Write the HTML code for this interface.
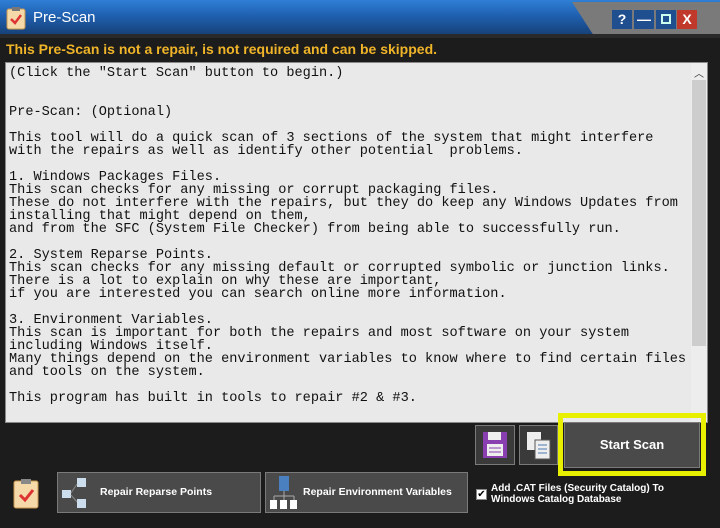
<!DOCTYPE html>
<html><head><meta charset="utf-8"><style>
*{margin:0;padding:0;box-sizing:border-box}
body{width:720px;height:528px;background:#1c1c1c;position:relative;overflow:hidden;font-family:"Liberation Sans",sans-serif}
.tb{position:absolute;left:0;top:0;width:720px;height:36px;background:linear-gradient(180deg,#2f7fd6 0%,#1f5fae 45%,#163f74 100%)}
.tb2{position:absolute;left:0;top:34px;width:720px;height:4px;background:#2a2a2a}
.tab{position:absolute;left:572px;top:2px;width:148px;height:32px;background:#7a7a7a;clip-path:polygon(0 0,100% 0,100% 100%,14% 100%)}
.title{position:absolute;left:33px;top:9px;color:#fff;font-size:15px}
.wb{position:absolute;top:10px;width:20px;height:19px;background:#1f4f8f;color:#fff;font-weight:bold;font-size:14px;text-align:center;line-height:19px}
.hdr{position:absolute;left:6px;top:41px;color:#f0b429;font-weight:bold;font-size:14px}
.ta{position:absolute;left:5px;top:62px;width:703px;height:361px;background:#e9e9e9;border:1px solid #888}
pre{position:absolute;left:3px;top:4px;font-family:"Liberation Mono","DejaVu Sans Mono",monospace;font-size:13.6px;line-height:13px;color:#111}
.sb{position:absolute;right:0;top:0;width:16px;height:100%;background:#ededed}
.th{position:absolute;left:1px;top:17px;width:14px;height:266px;background:#cdcdcd}
.btn{position:absolute;background:#4a4a4a;border:1px solid #7a7a7a;color:#fff;font-weight:bold;font-size:10.5px}
</style></head><body>
<div class="tb"></div><div class="tb2"></div>
<div class="tab"></div>
<svg style="position:absolute;left:6px;top:6px" width="20" height="24"><rect x="1" y="3" width="18" height="20" rx="2" fill="#f5d9a8" stroke="#c9964f"/><rect x="6" y="1" width="8" height="4" fill="#777"/><path d="M5 13l4 4 6-8" stroke="#d33" stroke-width="2.5" fill="none"/></svg>
<div class="title">Pre-Scan</div>
<div class="wb" style="left:612px">?</div>
<div class="wb" style="left:634px">—</div>
<div class="wb" style="left:656px"><div style="width:10px;height:10px;border:2px solid #cfe;margin:4px auto"></div></div>
<div class="wb" style="left:677px;background:#c0392b">X</div>
<div class="hdr">This Pre-Scan is not a repair, is not required and can be skipped.</div>
<div class="ta"><pre>(Click the "Start Scan" button to begin.)


Pre-Scan: (Optional)

This tool will do a quick scan of 3 sections of the system that might interfere
with the repairs as well as identify other potential  problems.

1. Windows Packages Files.
This scan checks for any missing or corrupt packaging files.
These do not interfere with the repairs, but they do keep any Windows Updates from
installing that might depend on them,
and from the SFC (System File Checker) from being able to successfully run.

2. System Reparse Points.
This scan checks for any missing default or corrupted symbolic or junction links.
There is a lot to explain on why these are important,
if you are interested you can search online more information.

3. Environment Variables.
This scan is important for both the repairs and most software on your system
including Windows itself.
Many things depend on the environment variables to know where to find certain files
and tools on the system.

This program has built in tools to repair #2 &amp; #3.</pre>
<div class="sb"><div style="font-size:10px;text-align:center;color:#333;margin-top:2px">︿</div><div class="th"></div></div></div>
<div class="btn" style="left:475px;top:425px;width:40px;height:40px;background:#3a3a3a"><svg width="38" height="38"><rect x="7" y="6" width="24" height="26" fill="#8a3fb0"/><rect x="12" y="6" width="13" height="8" fill="#eee"/><rect x="11" y="18" width="16" height="12" fill="#eee"/><path d="M13 22h12M13 26h12" stroke="#8a3fb0"/></svg></div>
<div class="btn" style="left:519px;top:425px;width:39px;height:40px;background:#3a3a3a"><svg width="38" height="38"><rect x="7" y="6" width="14" height="18" fill="#eee"/><rect x="15" y="14" width="15" height="19" fill="#eee" stroke="#555"/><path d="M18 19h9M18 23h9M18 27h9" stroke="#4a7ab0"/></svg></div>
<div style="position:absolute;left:558px;top:413px;width:148px;height:63px;border:5px solid #e6f000"></div>
<div class="btn" style="left:564px;top:422px;width:136px;height:46px;font-size:13px;line-height:44px;text-align:center">Start Scan</div>
<svg style="position:absolute;left:13px;top:478px" width="26" height="31"><rect x="1" y="3" width="24" height="27" rx="2" fill="#f5d9a8" stroke="#c9964f"/><rect x="8" y="1" width="10" height="5" fill="#888"/><path d="M7 17l5 5 8-10" stroke="#d33" stroke-width="3" fill="none"/></svg>
<div class="btn" style="left:57px;top:472px;width:204px;height:41px;line-height:39px;padding-left:42px">Repair Reparse Points
<svg style="position:absolute;left:2px;top:3px" width="40" height="34"><rect x="2" y="14" width="9" height="8" fill="#cde"/><rect x="17" y="2" width="9" height="9" fill="#cde"/><rect x="17" y="23" width="9" height="9" fill="#cde"/><path d="M11 17l6-9M11 19l6 7" stroke="#888"/></svg></div>
<div class="btn" style="left:265px;top:472px;width:203px;height:41px;line-height:39px;padding-left:37px">Repair Environment Variables
<svg style="position:absolute;left:2px;top:2px" width="36" height="36"><rect x="11" y="1" width="10" height="15" fill="#4a80c0"/><path d="M16 16v5M6 21h20M6 21v4M16 21v4M26 21v4" stroke="#aaa"/><rect x="2" y="25" width="7" height="9" fill="#fff"/><rect x="12" y="25" width="7" height="9" fill="#fff"/><rect x="22" y="25" width="7" height="9" fill="#fff"/></svg></div>
<div style="position:absolute;left:476px;top:489px;width:11px;height:11px;background:#fff;border:1px solid #888;font-size:10px;line-height:9px;text-align:center;color:#000">✔</div>
<div style="position:absolute;left:491px;top:484px;color:#fff;font-weight:bold;font-size:10px;line-height:10.5px">Add .CAT Files (Security Catalog) To<br>Windows Catalog Database</div>
</body></html>
